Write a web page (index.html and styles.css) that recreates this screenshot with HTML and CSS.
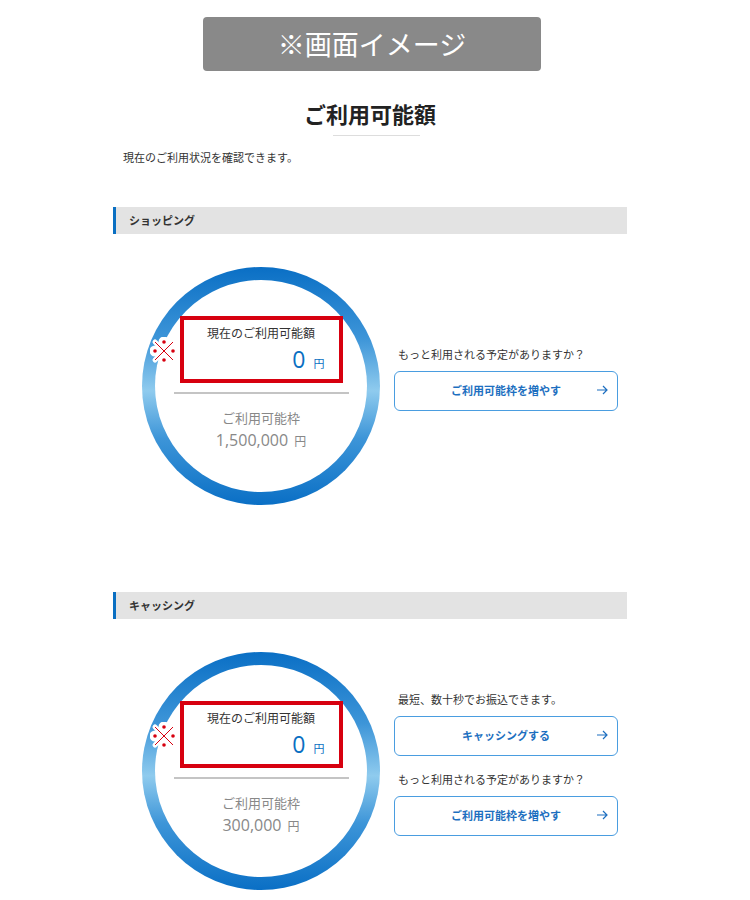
FILE: index.html
```html
<!DOCTYPE html>
<html lang="ja">
<head>
    <meta charset="UTF-8">
    <meta name="viewport" content="width=device-width, initial-scale=1.0">
    <title>ご利用可能額</title>
    <link rel="stylesheet" href="styles.css">
</head>
<body>
    <div class="banner">※画面イメージ</div>

    <div class="page">
        <h1 class="title">ご利用可能額</h1>
        <p class="lead">現在のご利用状況を確認できます。</p>

        <!-- Shopping -->
        <h2 class="section-head">ショッピング</h2>
        <div class="summary">
            <div class="ring">
                <div class="ring-inner">
                    <div class="current">
                        <svg class="note" width="28" height="28" viewBox="0 0 28 28">
                            <g stroke="#fff" stroke-width="5" stroke-linecap="round" fill="#fff">
                                <line x1="5" y1="5" x2="23" y2="23"/><line x1="23" y1="5" x2="5" y2="23"/>
                                <circle cx="14" cy="5" r="3"/><circle cx="14" cy="23" r="3"/>
                                <circle cx="5" cy="14" r="3"/><circle cx="23" cy="14" r="3"/>
                            </g>
                            <g stroke="#d7000f" stroke-width="1" fill="#d7000f">
                                <line x1="5" y1="5" x2="23" y2="23"/><line x1="23" y1="5" x2="5" y2="23"/>
                                <circle cx="14" cy="5" r="1.8" stroke="none"/><circle cx="14" cy="23" r="1.8" stroke="none"/>
                                <circle cx="5" cy="14" r="1.8" stroke="none"/><circle cx="23" cy="14" r="1.8" stroke="none"/>
                            </g>
                        </svg>
                        <div class="current-label">現在のご利用可能額</div>
                        <div class="current-value"><span class="num">0</span><span class="yen">円</span></div>
                    </div>
                    <div class="divider"></div>
                    <div class="limit-label">ご利用可能枠</div>
                    <div class="limit-value">1,500,000<span class="yen">円</span></div>
                </div>
            </div>
            <div class="actions">
                <p class="hint">もっと利用される予定がありますか？</p>
                <a class="btn" href="#">ご利用可能枠を増やす
                    <svg class="arrow" width="12" height="12" viewBox="0 0 12 12"><path d="M1 6H11M7 2L11 6L7 10" fill="none" stroke="#1d6fc0" stroke-width="1.2"/></svg>
                </a>
            </div>
        </div>

        <!-- Cashing -->
        <h2 class="section-head">キャッシング</h2>
        <div class="summary">
            <div class="ring">
                <div class="ring-inner">
                    <div class="current">
                        <svg class="note" width="28" height="28" viewBox="0 0 28 28">
                            <g stroke="#fff" stroke-width="5" stroke-linecap="round" fill="#fff">
                                <line x1="5" y1="5" x2="23" y2="23"/><line x1="23" y1="5" x2="5" y2="23"/>
                                <circle cx="14" cy="5" r="3"/><circle cx="14" cy="23" r="3"/>
                                <circle cx="5" cy="14" r="3"/><circle cx="23" cy="14" r="3"/>
                            </g>
                            <g stroke="#d7000f" stroke-width="1" fill="#d7000f">
                                <line x1="5" y1="5" x2="23" y2="23"/><line x1="23" y1="5" x2="5" y2="23"/>
                                <circle cx="14" cy="5" r="1.8" stroke="none"/><circle cx="14" cy="23" r="1.8" stroke="none"/>
                                <circle cx="5" cy="14" r="1.8" stroke="none"/><circle cx="23" cy="14" r="1.8" stroke="none"/>
                            </g>
                        </svg>
                        <div class="current-label">現在のご利用可能額</div>
                        <div class="current-value"><span class="num">0</span><span class="yen">円</span></div>
                    </div>
                    <div class="divider"></div>
                    <div class="limit-label">ご利用可能枠</div>
                    <div class="limit-value">300,000<span class="yen">円</span></div>
                </div>
            </div>
            <div class="actions">
                <p class="hint">最短、数十秒でお振込できます。</p>
                <a class="btn" href="#">キャッシングする
                    <svg class="arrow" width="12" height="12" viewBox="0 0 12 12"><path d="M1 6H11M7 2L11 6L7 10" fill="none" stroke="#1d6fc0" stroke-width="1.2"/></svg>
                </a>
                <p class="hint">もっと利用される予定がありますか？</p>
                <a class="btn" href="#">ご利用可能枠を増やす
                    <svg class="arrow" width="12" height="12" viewBox="0 0 12 12"><path d="M1 6H11M7 2L11 6L7 10" fill="none" stroke="#1d6fc0" stroke-width="1.2"/></svg>
                </a>
            </div>
        </div>
    </div>
</body>
</html>
```

FILE: styles.css
```css
body {
    margin: 0;
    font-family: "Noto Sans CJK JP", "Noto Sans", sans-serif;
    color: #333;
    background: #fff;
}
.banner {
    width: 338px;
    height: 54px;
    margin: 17px 0 0 203px;
    background-color: #898989;
    border-radius: 4px;
    color: #fff;
    font-size: 27px;
    line-height: 54px;
    text-align: center;
}
.page {
    width: 514px;
    margin-left: 113px;
}
.title {
    margin: 26px 0 0;
    font-size: 22px;
    font-weight: bold;
    text-align: center;
    line-height: 32px;
    color: #222;
}
.title::after {
    content: "";
    display: block;
    width: 87px;
    height: 1px;
    margin: 6px 0 0 220px;
    background-color: #ddd;
}
.lead {
    margin: 12px 0 0 10px;
    font-size: 11px;
    line-height: 18px;
}
.section-head {
    margin: 41px 0 0;
    height: 27px;
    padding-left: 13px;
    border-left: 3px solid #0a6fc2;
    background-color: #e3e3e3;
    font-size: 11px;
    font-weight: bold;
    line-height: 27px;
}
.summary {
    display: flex;
    align-items: center;
    padding: 33px 0 46px 29px;
}
.ring {
    width: 238px;
    height: 238px;
    padding: 13px;
    box-sizing: border-box;
    border-radius: 50%;
    background: linear-gradient(#0a6fc5 0%, #3d95d8 30%, #8fcbee 52%, #3d95d8 72%, #0a6fc5 100%);
    flex-shrink: 0;
}
.ring-inner {
    height: 100%;
    border-radius: 50%;
    background-color: #fff;
    display: flex;
    flex-direction: column;
    align-items: center;
}
.current {
    position: relative;
    width: 163px;
    height: 67px;
    margin-top: 36px;
    box-sizing: border-box;
    border: 4px solid #d7000f;
    text-align: center;
}
.note {
    position: absolute;
    left: -34px;
    top: 17px;
}
.current-label {
    margin-top: 4px;
    font-size: 12px;
    line-height: 18px;
}
.current-value {
    margin-top: 3px;
    text-align: right;
    padding-right: 14px;
    color: #0a6fc2;
    line-height: 28px;
}
.current-value .num {
    font-family: "Open Sans", "Noto Sans", sans-serif;
    font-size: 23px;
}
.yen {
    font-size: 11px;
    margin-left: 8px;
}
.divider {
    width: 175px;
    height: 2px;
    margin-top: 9px;
    background-color: #c4c4c4;
}
.limit-label {
    margin-top: 15px;
    font-size: 13px;
    line-height: 18px;
    color: #888;
}
.limit-value {
    margin-top: 3px;
    font-family: "Open Sans", "Noto Sans", sans-serif;
    font-size: 16px;
    line-height: 20px;
    color: #888;
}
.limit-value .yen {
    font-family: "Noto Sans CJK JP", sans-serif;
    font-size: 12px;
    margin-left: 6px;
}
.actions {
    margin-left: 14px;
    width: 224px;
    margin-top: -16px;
}
.hint {
    margin: 0 0 9px 4px;
    font-size: 11px;
    line-height: 16px;
}
.btn {
    position: relative;
    display: block;
    height: 40px;
    margin-bottom: 15px;
    box-sizing: border-box;
    border: 1.5px solid #4a9de0;
    border-radius: 6px;
    color: #1d6fc0;
    font-size: 11px;
    font-weight: bold;
    line-height: 37px;
    text-align: center;
    text-decoration: none;
}
.btn:last-child {
    margin-bottom: 0;
}
.arrow {
    position: absolute;
    right: 9px;
    top: 12px;
}
```
